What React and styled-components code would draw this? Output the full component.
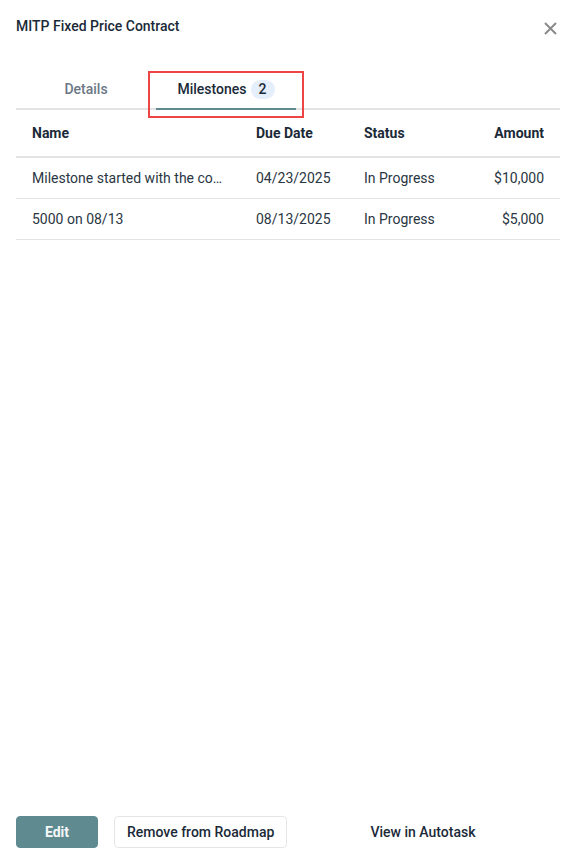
import React from "react";
import styled, { createGlobalStyle } from "styled-components";

const Global = createGlobalStyle`
  html, body { margin: 0; padding: 0; background: #fff; }
  body { font-family: Roboto, "Liberation Sans", Arial, sans-serif; color: #1b2a38; }
  * { box-sizing: border-box; }
`;

const Panel = styled.div`
  width: 574px;
  height: 864px;
  display: flex;
  flex-direction: column;
  padding: 0 14px 16px 16px;
  position: relative;
`;

const Header = styled.div`
  display: flex;
  align-items: center;
  justify-content: space-between;
  height: 52px;
`;

const Title = styled.h1`
  margin: 0;
  font-size: 14px;
  font-weight: 500;
  color: #1b2a38;
`;

const Close = styled.button`
  border: none;
  background: none;
  padding: 0;
  width: 20px;
  height: 20px;
  display: flex;
  align-items: center;
  justify-content: center;
  margin-top: 4px;
  cursor: pointer;
`;

const Tabs = styled.div`
  display: flex;
  margin-top: 16px;
  border-bottom: 2px solid #e3e3e3;
  width: 544px;
`;

const Tab = styled.div`
  width: 140px;
  height: 42px;
  display: flex;
  align-items: center;
  justify-content: center;
  gap: 4px;
  padding-top: 2px;
  font-size: 14px;
  font-weight: 500;
  color: ${(p) => (p.$active ? "#1b2a38" : "#6b7785")};
  border-bottom: 2px solid ${(p) => (p.$active ? "#5f8a90" : "transparent")};
  margin-bottom: -2px;
`;

const Badge = styled.span`
  display: inline-flex;
  align-items: center;
  justify-content: center;
  min-width: 24px;
  height: 19px;
  border-radius: 10px;
  background: #e5eefb;
  color: #1b2a38;
  font-size: 14px;
  font-weight: 500;
`;

const Table = styled.div`
  width: 544px;
  display: flex;
  flex-direction: column;
`;

const Row = styled.div`
  display: grid;
  grid-template-columns: 224px 108px 1fr 100px;
  align-items: center;
  height: ${(p) => (p.$head ? "48px" : "41px")};
  padding: 0 16px;
  border-bottom: ${(p) => (p.$head ? "2px" : "1px")} solid #e3e3e3;
  font-size: 14px;
  font-weight: ${(p) => (p.$head ? 700 : 400)};
  color: ${(p) => (p.$head ? "#1b2a38" : "#2a3642")};
  ${(p) => (p.$head ? "padding-bottom: 1px;" : "")}
`;

const Cell = styled.div`
  white-space: nowrap;
  overflow: hidden;
  text-overflow: ellipsis;
  text-align: ${(p) => (p.$right ? "right" : "left")};
  padding-right: ${(p) => (p.$pad ? "30px" : "0")};
`;

const Spacer = styled.div`
  flex: 1;
`;

const Footer = styled.div`
  display: flex;
  align-items: center;
  gap: 16px;
`;

const Button = styled.button`
  height: 32px;
  border-radius: 4px;
  font-family: inherit;
  font-size: 14px;
  padding: 0 12px;
  white-space: nowrap;
  cursor: pointer;
  border: 1px solid ${(p) => (p.$variant === "primary" ? "#5f8a90" : p.$variant === "ghost" ? "transparent" : "#e6e6e6")};
  background: ${(p) => (p.$variant === "primary" ? "#5f8a90" : "#fff")};
  color: ${(p) => (p.$variant === "primary" ? "#f4f7f8" : "#1b2a38")};
  width: ${(p) => p.$w || "auto"};
  font-weight: ${(p) => (p.$variant === "primary" ? 700 : 500)};
`;

const Highlight = styled.div`
  position: absolute;
  left: 148px;
  top: 71px;
  width: 156px;
  height: 47px;
  border: 2px solid #ef4444;
  pointer-events: none;
`;

const rows = [
  ["Milestone started with the contract", "04/23/2025", "In Progress", "$10,000"],
  ["5000 on 08/13", "08/13/2025", "In Progress", "$5,000"],
];

export default function App() {
  return (
    <>
      <Global />
      <Panel>
        <Header>
          <Title>MITP Fixed Price Contract</Title>
          <Close aria-label="Close">
            <svg width="13" height="13" viewBox="0 0 13 13">
              <path d="M1 1L12 12M12 1L1 12" stroke="#8a8a8a" strokeWidth="2" />
            </svg>
          </Close>
        </Header>
        <Tabs>
          <Tab>Details</Tab>
          <Tab $active>
            Milestones <Badge>2</Badge>
          </Tab>
        </Tabs>
        <Table>
          <Row $head>
            <Cell>Name</Cell>
            <Cell>Due Date</Cell>
            <Cell>Status</Cell>
            <Cell $right>Amount</Cell>
          </Row>
          {rows.map((r, i) => (
            <Row key={i}>
              <Cell $pad>{r[0]}</Cell>
              <Cell>{r[1]}</Cell>
              <Cell>{r[2]}</Cell>
              <Cell $right>{r[3]}</Cell>
            </Row>
          ))}
        </Table>
        <Spacer />
        <Footer>
          <Button $variant="primary" $w="82px">Edit</Button>
          <Button $w="173px">Remove from Roadmap</Button>
          <Button $variant="ghost" $w="240px">View in Autotask</Button>
        </Footer>
        <Highlight />
      </Panel>
    </>
  );
}
